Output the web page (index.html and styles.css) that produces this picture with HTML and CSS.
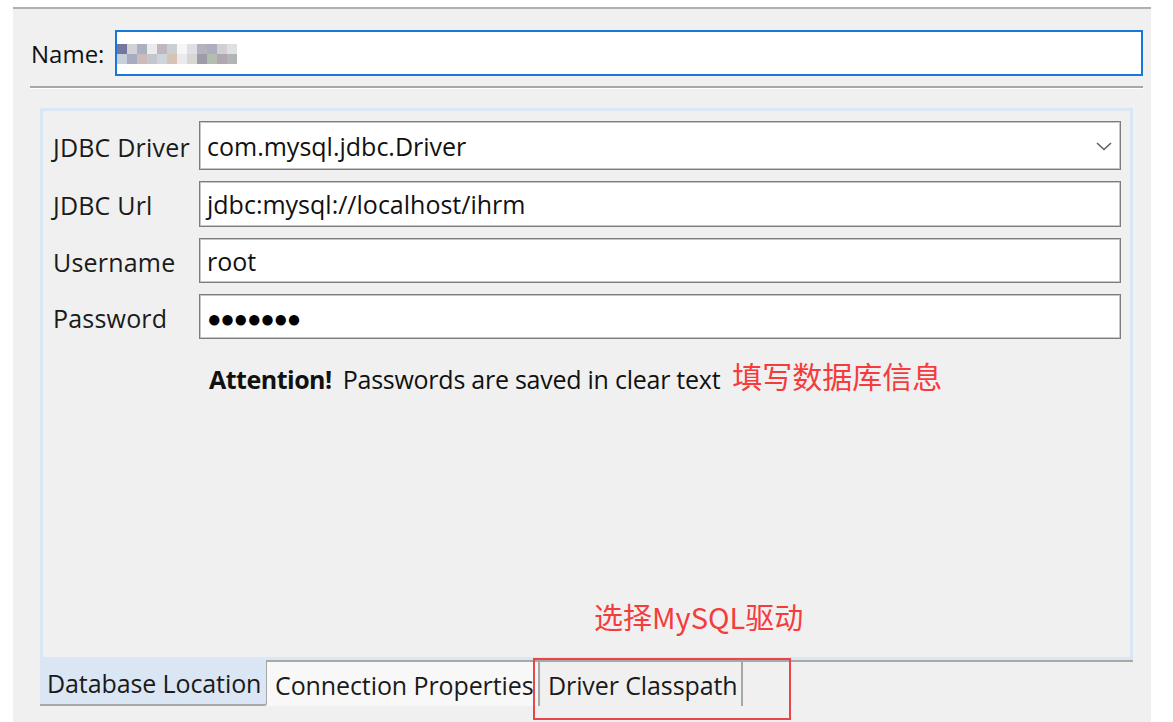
FILE: index.html
```html
<!DOCTYPE html>
<html>
<head>
<meta charset="utf-8">
<link rel="stylesheet" href="styles.css">
</head>
<body>
<div class="window">
  <div class="name-row">
    <span class="name-label">Name:</span>
    <div class="name-input">
      <div class="mosaic">
        <i style="background:#5a5f8c"></i><i style="background:#c9c9cf"></i><i style="background:#9aa3b6"></i><i style="background:#e8e8ea"></i><i style="background:#b3aab1"></i><i style="background:#c2c6cc"></i><i style="background:#f4f4f4"></i><i style="background:#d9dbe1"></i><i style="background:#a7a5b0"></i><i style="background:#9e9fb3"></i><i style="background:#c8c8cc"></i><i style="background:#dadada"></i>
        <i style="background:#c0c6d6"></i><i style="background:#9a9cb6"></i><i style="background:#c4aeae"></i><i style="background:#b8bcc4"></i><i style="background:#c5ccd6"></i><i style="background:#d0b8a6"></i><i style="background:#e6e6ea"></i><i style="background:#cfd1c9"></i><i style="background:#8f8b98"></i><i style="background:#a6b2a2"></i><i style="background:#9f9aa0"></i><i style="background:#a3a8a8"></i>
      </div>
    </div>
  </div>
  <div class="separator"></div>
  <div class="group">
    <div class="form">
      <label class="lbl">JDBC Driver</label>
      <div class="field combo">
        <span>com.mysql.jdbc.Driver</span>
        <svg class="chev" width="16" height="9" viewBox="0 0 16 9"><path d="M1 1 L8 7.5 L15 1" fill="none" stroke="#606060" stroke-width="1.6"/></svg>
      </div>
      <label class="lbl">JDBC Url</label>
      <div class="field">jdbc:mysql://localhost/ihrm</div>
      <label class="lbl">Username</label>
      <div class="field">root</div>
      <label class="lbl">Password</label>
      <div class="field dots">●●●●●●●</div>
    </div>
    <div class="attention">
      <b>Attention!</b><span class="att-text">Passwords are saved in clear text</span><span class="note note-a">填写数据库信息</span>
    </div>
    <div class="spacer"></div>
    <div class="note note-b">选择MySQL驱动</div>
  </div>
  <div class="tabs">
    <div class="tab tab-sel">Database Location</div>
    <div class="tab-rest">
      <div class="tab tab-conn">Connection Properties</div>
      <div class="tab tab-cp">Driver Classpath</div>
      <div class="tab-fill"></div>
    </div>
  </div>
  <div class="red-box"></div>
</div>
</body>
</html>
```
FILE: styles.css
```css
* { box-sizing: border-box; }
html, body { margin: 0; padding: 0; background: #ffffff; }
body {
  font-family: "Open Sans", "Noto Sans", "Liberation Sans", sans-serif;
  font-size: 25px;
  color: #1a1a1a;
  overflow: hidden;
  width: 1173px;
  height: 722px;
}
.window {
  position: relative;
  margin: 7px 0 0 13px;
  width: 1138px;
  height: 715px;
  background: #f0f0f0;
  border-top: 2px solid #b0b0b0;
}
.name-row {
  display: flex;
  align-items: center;
  padding: 21px 0 0 18px;
}
.name-label {
  width: 84px;
  font-size: 24px;
  color: #111;
}
.name-input {
  width: 1028px;
  height: 46px;
  background: #fff;
  border: 2px solid #1679da;
  display: flex;
  align-items: center;
  padding-left: 0;
}
.mosaic {
  display: grid;
  grid-template-columns: repeat(12, 10px);
  grid-auto-rows: 10px;
  margin-top: 2px;
}
.mosaic i { display: block; opacity: 0.85; }
.separator {
  margin: 10px 0 0 17px;
  width: 1113px;
  height: 3px;
  border-top: 2px solid #a8a8a8;
  border-bottom: 1px solid #ffffff;
}
.group {
  margin: 19px 0 0 27px;
  width: 1093px;
  height: 552px;
  border: 3px solid #dae6f3;
  display: flex;
  flex-direction: column;
}
.form {
  display: grid;
  grid-template-columns: 146px 922px;
  grid-template-rows: 49px 46px 45px 45px;
  row-gap: 11px;
  padding: 10px 0 0 10px;
  align-items: center;
}
.lbl { font-size: 25px; letter-spacing: 0.2px; color: #1a1a1a; margin-top: 2px; white-space: nowrap; }
.field {
  height: 100%;
  background: #fff;
  border: 1px solid #7d7d7d;
  box-shadow: inset 0 0 0 1px #c6c6c6;
  display: flex;
  align-items: center;
  padding-left: 7px;
  font-size: 25px;
  letter-spacing: 0;
  color: #111;
}
.combo { justify-content: space-between; padding-right: 8px; }
.chev { margin-top: 2px; }
.dots { font-size: 24px; letter-spacing: -1.2px; color: #000; padding-top: 2px; }
.attention {
  margin: 23px 0 0 166px;
  display: flex;
  align-items: center;
  font-size: 25px;
  color: #111;
  white-space: pre;
}
.attention b { font-weight: 700; letter-spacing: -0.5px; }
.att-text { margin-left: 11px; letter-spacing: -0.25px; }
.note {
  font-family: "Noto Sans CJK SC", "Noto Sans", sans-serif;
  color: #f53c3c;
  font-size: 29px;
  line-height: 34px;
  letter-spacing: 0;
}
.note-a { margin-left: 12px; margin-top: -8px; font-size: 30px; }
.spacer { flex: 1; }
.note-b { margin: 0 0 24px 551px; }
.tabs {
  display: flex;
  margin-left: 27px;
  width: 1093px;
  height: 46px;
}
.tab {
  font-size: 25px;
  letter-spacing: -0.1px;
  color: #1a1a1a;
  display: flex;
  align-items: center;
  white-space: nowrap;
  overflow: hidden;
  padding-top: 2px;
}
.tab-sel {
  width: 227px;
  background: #dae6f3;
  padding-left: 7px;
  border-bottom: 2px solid #a8a8a8;
  border-right: 1px solid #a8a8a8;
  border-bottom-right-radius: 3px;
}
.tab-rest {
  flex: 1;
  display: flex;
  border-top: 2px solid #a8a8a8;
  height: 46px;
}
.tab-conn {
  width: 273px;
  background: #f8f8f8;
  padding-left: 8px;
  border-right: 2px solid #a8a8a8;
}
.tab-cp {
  width: 203px;
  padding-left: 8px;
  border-right: 2px solid #a8a8a8;
}
.tab-fill { flex: 1; }
.red-box {
  position: absolute;
  left: 520px;
  top: 649px;
  width: 258px;
  height: 62px;
  border: 2px solid #e8474a;
}
```
